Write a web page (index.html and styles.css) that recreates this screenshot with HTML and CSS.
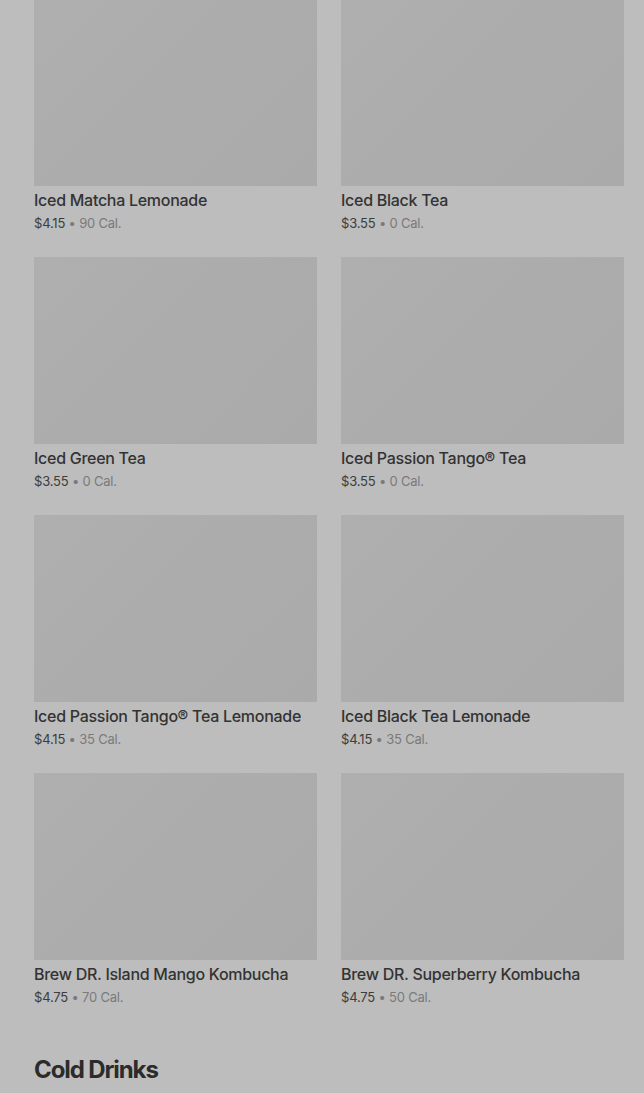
FILE: index.html
```html
<!DOCTYPE html>
<html>
<head>
    <title>Menu</title>
    <link rel="stylesheet" href="styles.css">
</head>
<body>
    <div class="menu">
        <div class="grid">
            <div class="item">
                <div class="thumb"></div>
                <div class="name">Iced Matcha Lemonade</div>
                <div class="meta"><span class="price">$4.15</span> • 90 Cal.</div>
            </div>
            <div class="item">
                <div class="thumb"></div>
                <div class="name">Iced Black Tea</div>
                <div class="meta"><span class="price">$3.55</span> • 0 Cal.</div>
            </div>
            <div class="item">
                <div class="thumb"></div>
                <div class="name">Iced Green Tea</div>
                <div class="meta"><span class="price">$3.55</span> • 0 Cal.</div>
            </div>
            <div class="item">
                <div class="thumb"></div>
                <div class="name">Iced Passion Tango® Tea</div>
                <div class="meta"><span class="price">$3.55</span> • 0 Cal.</div>
            </div>
            <div class="item">
                <div class="thumb"></div>
                <div class="name">Iced Passion Tango® Tea Lemonade</div>
                <div class="meta"><span class="price">$4.15</span> • 35 Cal.</div>
            </div>
            <div class="item">
                <div class="thumb"></div>
                <div class="name">Iced Black Tea Lemonade</div>
                <div class="meta"><span class="price">$4.15</span> • 35 Cal.</div>
            </div>
            <div class="item">
                <div class="thumb"></div>
                <div class="name">Brew DR. Island Mango Kombucha</div>
                <div class="meta"><span class="price">$4.75</span> • 70 Cal.</div>
            </div>
            <div class="item">
                <div class="thumb"></div>
                <div class="name">Brew DR. Superberry Kombucha</div>
                <div class="meta"><span class="price">$4.75</span> • 50 Cal.</div>
            </div>
        </div>

        <h2 class="section-title">Cold Drinks</h2>
    </div>
</body>
</html>
```

FILE: styles.css
```css
body {
    margin: 0;
    background: #bdbdbd;
    font-family: Inter, "Noto Sans", sans-serif;
    color: #2e2e2e;
    overflow: hidden;
}

.menu {
    padding: 0 20px 0 34px;
    margin-top: -1px;
}

.grid {
    display: grid;
    grid-template-columns: 283px 283px;
    column-gap: 24px;
    row-gap: 24px;
}

.thumb {
    height: 187px;
    background: linear-gradient(135deg, #afafaf 0%, #acacac 50%, #aaaaaa 100%);
}

.name {
    margin-top: 3px;
    font-size: 16px;
    line-height: 22px;
    font-weight: 500;
    letter-spacing: -0.28px;
    color: #333333;
    white-space: nowrap;
}

.meta {
    margin-top: 2px;
    font-size: 13px;
    line-height: 20px;
    letter-spacing: -0.2px;
    color: #7a7a7a;
}

.price {
    color: #3c3c3c;
}

.section-title {
    margin: 47px 0 0;
    font-size: 24px;
    line-height: 32px;
    font-weight: 700;
    letter-spacing: -1.1px;
    color: #2b2b2b;
}
```
